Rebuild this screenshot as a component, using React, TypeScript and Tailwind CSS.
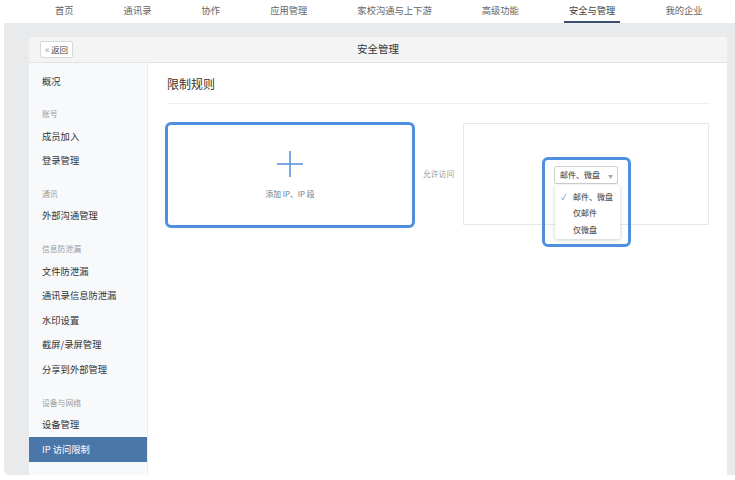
import React from "react";

const navItems = ["首页", "通讯录", "协作", "应用管理", "家校沟通与上下游", "高级功能", "安全与管理", "我的企业"];

type SideItem = { label: string; group?: boolean; active?: boolean };
const side: SideItem[] = [
  { label: "概况" },
  { label: "账号", group: true },
  { label: "成员加入" },
  { label: "登录管理" },
  { label: "通讯", group: true },
  { label: "外部沟通管理" },
  { label: "信息防泄漏", group: true },
  { label: "文件防泄漏" },
  { label: "通讯录信息防泄漏" },
  { label: "水印设置" },
  { label: "截屏/录屏管理" },
  { label: "分享到外部管理" },
  { label: "设备与网络", group: true },
  { label: "设备管理" },
  { label: "IP 访问限制", active: true },
];

export default function App() {
  return (
    <div
      className="w-[735px] h-[480px] bg-white relative overflow-hidden text-[#333]"
      style={{ fontFamily: '"Noto Sans CJK SC", "Noto Sans", sans-serif' }}
    >
      {/* top nav */}
      <div className="h-[23px] flex items-stretch pl-[55px] gap-[50px] text-[9.3px] text-[#666] bg-white">
        {navItems.map((n) => (
          <div key={n} className="relative flex items-center leading-none pb-[1px]">
            <span className={n === "安全与管理" ? "text-[#444]" : ""}>{n}</span>
            {n === "安全与管理" && (
              <div className="absolute left-[-5px] right-[-5px] bottom-0 h-[2px] bg-[#3b506e]" />
            )}
          </div>
        ))}
      </div>

      {/* gray frame */}
      <div className="ml-[4px] h-[452px] bg-[#e9eaec] rounded-bl-[6px] pt-[14px] pl-[25px] pr-[8px] flex flex-col">
        <div className="flex-1 bg-white flex flex-col min-h-0">
          {/* header */}
          <div className="h-[26px] bg-[#f4f4f4] border-b border-[#e3e3e3] relative flex items-center justify-center shrink-0">
            <div className="absolute left-[11px] top-[4px] h-[17px] w-[33px] bg-white border border-[#d9d9d9] rounded-[2px] flex items-center justify-center text-[8.5px] text-[#444] leading-none">
              <span className="text-[#aaa] text-[10px] mr-[1px] -mt-[1px]">«</span>返回
            </div>
            <span className="text-[10.5px] text-[#333] leading-none">安全管理</span>
          </div>

          <div className="flex flex-1 min-h-0">
            {/* sidebar */}
            <div className="w-[119px] bg-[#f8f9fb] border-r border-[#eceef1] flex flex-col pt-[6px] shrink-0">
              {side.map((s, i) =>
                s.group ? (
                  <div key={i} className="h-[19.5px] mt-[11px] pl-[13px] flex items-center text-[7.8px] text-[#999] leading-none">
                    {s.label}
                  </div>
                ) : s.active ? (
                  <div key={i} className="h-[25px] pl-[13px] flex items-center text-[9.3px] text-white bg-[#4a76a8] leading-none">
                    {s.label}
                  </div>
                ) : (
                  <div key={i} className="h-[24.6px] pl-[13px] flex items-center text-[9.3px] text-[#333] leading-none">
                    {s.label}
                  </div>
                )
              )}
            </div>

            {/* main */}
            <div className="flex-1 pl-[19px] pr-[17px] relative">
              <div className="h-[41px] border-b border-[#efefef] flex items-center text-[12px] text-[#333] pt-[1px]">
                限制规则
              </div>
              <div className="flex items-start mt-[18px]">
                {/* add box */}
                <div className="-ml-[2px] w-[250px] h-[106px] border-[3px] border-[#4f8fdf] rounded-[6px] flex flex-col items-center justify-center shrink-0">
                  <svg width="28" height="28" viewBox="0 0 28 28" className="-mt-[2px]">
                    <line x1="14" y1="1" x2="14" y2="27" stroke="#5b93db" strokeWidth="1.6" />
                    <line x1="1" y1="14" x2="27" y2="14" stroke="#5b93db" strokeWidth="1.6" />
                  </svg>
                  <div className="mt-[12px] text-[7.8px] text-[#6b7789] leading-none">添加 IP、IP 段</div>
                </div>
                <div className="ml-[8px] mt-[48px] text-[7.8px] text-[#999] leading-none w-[40px] shrink-0">允许访问</div>
                <div className="w-[246px] h-[102px] border border-[#e8e8e8] relative shrink-0 mt-[1px]" />
              </div>

              {/* highlighted dropdown overlay */}
              <div className="absolute left-[394px] top-[94px] w-[89px] h-[90px] border-[3px] border-[#4f8fdf] rounded-[6px]">
                <div className="absolute left-[9px] top-[6px] w-[64px] h-[18px] border border-[#cfcfcf] bg-white rounded-[2px] flex items-center pl-[5px] text-[8px] text-[#333] leading-none">
                  邮件、微盘
                  <span className="ml-[8px] text-[5px] text-[#aaa]">▼</span>
                </div>
                <div className="absolute left-[10px] top-[25px] w-[65px] h-[54px] bg-white shadow-[0_1px_4px_rgba(0,0,0,0.2)] rounded-[2px] text-[8px] text-[#333] leading-none">
                  <div className="h-[17px] mt-[3px] flex items-center pl-[6px]">
                    <span className="text-[#4f8fdf] text-[8px] w-[12px]">✓</span>邮件、微盘
                  </div>
                  <div className="h-[16px] flex items-center pl-[18px]">仅邮件</div>
                  <div className="h-[17px] flex items-center pl-[18px]">仅微盘</div>
                </div>
              </div>
            </div>
          </div>
        </div>
      </div>
    </div>
  );
}
